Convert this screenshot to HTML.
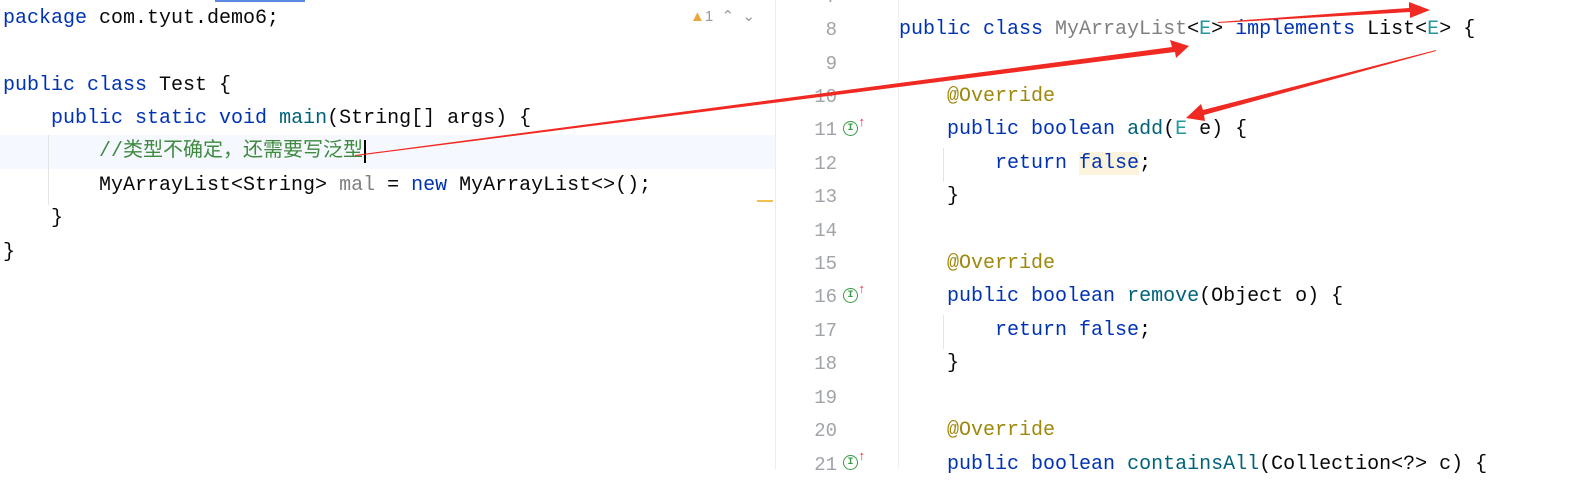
<!DOCTYPE html>
<html><head><meta charset="utf-8"><style>
body{margin:0;width:1580px;height:469px;overflow:hidden;background:#fff;position:relative;font-family:"Liberation Mono","Noto Sans CJK SC",monospace;font-size:20px;color:#080808}
.l{position:absolute;height:34px;line-height:34px;white-space:pre}
.k{color:#0033b3}.g{color:#808080}.t{color:#20999d}.m{color:#00627a}.a{color:#9e880d}.c{color:#3f8a3f}
.n{position:absolute;width:40px;text-align:right;left:797px;color:#a0a4a8;height:34px;line-height:34px;font-size:19px}
.ic{position:absolute;left:843px;width:13px;height:13px;border:1.5px solid #3a9a4a;border-radius:50%;color:#3a9a4a;font-size:10px;line-height:13px;text-align:center;font-weight:bold}
.ar{position:absolute;left:858px;color:#e03040;font-size:13px}
</style></head><body>
<div style="position:absolute;left:215px;top:0;width:90px;height:2px;background:#5a8ae6"></div>
<div style="position:absolute;left:0;top:135px;width:775px;height:34px;background:#f5f8fe"></div>
<div style="position:absolute;left:48px;top:135px;width:1px;height:70px;background:#e4e4e4"></div>
<div style="position:absolute;left:775px;top:0;width:1px;height:469px;background:#ececec"></div>
<div style="position:absolute;left:898px;top:0;width:1px;height:469px;background:#f0f0f0"></div>
<div style="position:absolute;left:943px;top:148px;width:1px;height:34px;background:#e4e4e4"></div>
<div style="position:absolute;left:943px;top:315px;width:1px;height:34px;background:#e4e4e4"></div>
<div style="position:absolute;left:757px;top:200px;width:16px;height:2px;background:#f0c050"></div>
<div style="position:absolute;left:690px;top:7px;font-family:'Liberation Sans',sans-serif;font-size:15px;color:#999"><span style="color:#e8a93a">▲</span>1 &nbsp;⌃ &nbsp;⌄</div>

<div class="l" style="left:3px;top:2px"><span class="k">package</span> com.tyut.demo6;</div>
<div class="l" style="left:3px;top:69px"><span class="k">public class</span> Test {</div>
<div class="l" style="left:3px;top:102px">    <span class="k">public static void</span> <span class="m">main</span>(String[] args) {</div>
<div class="l" style="left:3px;top:135px">        <span class="c">//类型不确定，还需要写泛型</span><span style="border-left:2px solid #000;margin-left:1px"> </span></div>
<div class="l" style="left:3px;top:169px">        MyArrayList&lt;String&gt; <span class="g">mal</span> = <span class="k">new</span> MyArrayList&lt;&gt;();</div>
<div class="l" style="left:3px;top:202px">    }</div>
<div class="l" style="left:3px;top:236px">}</div>

<div class="n" style="top:-20px">7</div>
<div class="n" style="top:13px">8</div>
<div class="n" style="top:47px">9</div>
<div class="n" style="top:80px">10</div>
<div class="n" style="top:113px">11</div>
<div class="n" style="top:147px">12</div>
<div class="n" style="top:180px">13</div>
<div class="n" style="top:214px">14</div>
<div class="n" style="top:247px">15</div>
<div class="n" style="top:280px">16</div>
<div class="n" style="top:314px">17</div>
<div class="n" style="top:347px">18</div>
<div class="n" style="top:381px">19</div>
<div class="n" style="top:414px">20</div>
<div class="n" style="top:448px">21</div>
<div class="ic" style="top:121px">I</div><div class="ar" style="top:115px">↑</div>
<div class="ic" style="top:288px">I</div><div class="ar" style="top:282px">↑</div>
<div class="ic" style="top:455px">I</div><div class="ar" style="top:449px">↑</div>

<div class="l" style="left:899px;top:13px"><span class="k">public class</span> <span class="g">MyArrayList</span>&lt;<span class="t">E</span>&gt; <span class="k">implements</span> List&lt;<span class="t">E</span>&gt; {</div>
<div class="l" style="left:899px;top:80px">    <span class="a">@Override</span></div>
<div class="l" style="left:899px;top:113px">    <span class="k">public boolean</span> <span class="m">add</span>(<span class="t">E</span> e) {</div>
<div class="l" style="left:899px;top:147px">        <span class="k">return</span> <span class="k" style="background:#fcf3dc">false</span>;</div>
<div class="l" style="left:899px;top:180px">    }</div>
<div class="l" style="left:899px;top:247px">    <span class="a">@Override</span></div>
<div class="l" style="left:899px;top:280px">    <span class="k">public boolean</span> <span class="m">remove</span>(Object o) {</div>
<div class="l" style="left:899px;top:314px">        <span class="k">return false</span>;</div>
<div class="l" style="left:899px;top:347px">    }</div>
<div class="l" style="left:899px;top:414px">    <span class="a">@Override</span></div>
<div class="l" style="left:899px;top:448px">    <span class="k">public boolean</span> <span class="m">containsAll</span>(Collection&lt;?&gt; c) {</div>

<svg style="position:absolute;left:0;top:0" width="1580" height="469">
<polygon points="355,156 1175,52 1176,58 1189,46 1170,40 1172,47 355,155" fill="#f02a22"/>
<polygon points="1218,23 1410,12 1410,18 1430,10 1409,2 1409,8 1218,22" fill="#f02a22"/>
<polygon points="1436,50 1203,110 1201,104 1186,118 1205,121 1204,115 1436,51" fill="#f02a22"/>
</svg>
</body></html>
